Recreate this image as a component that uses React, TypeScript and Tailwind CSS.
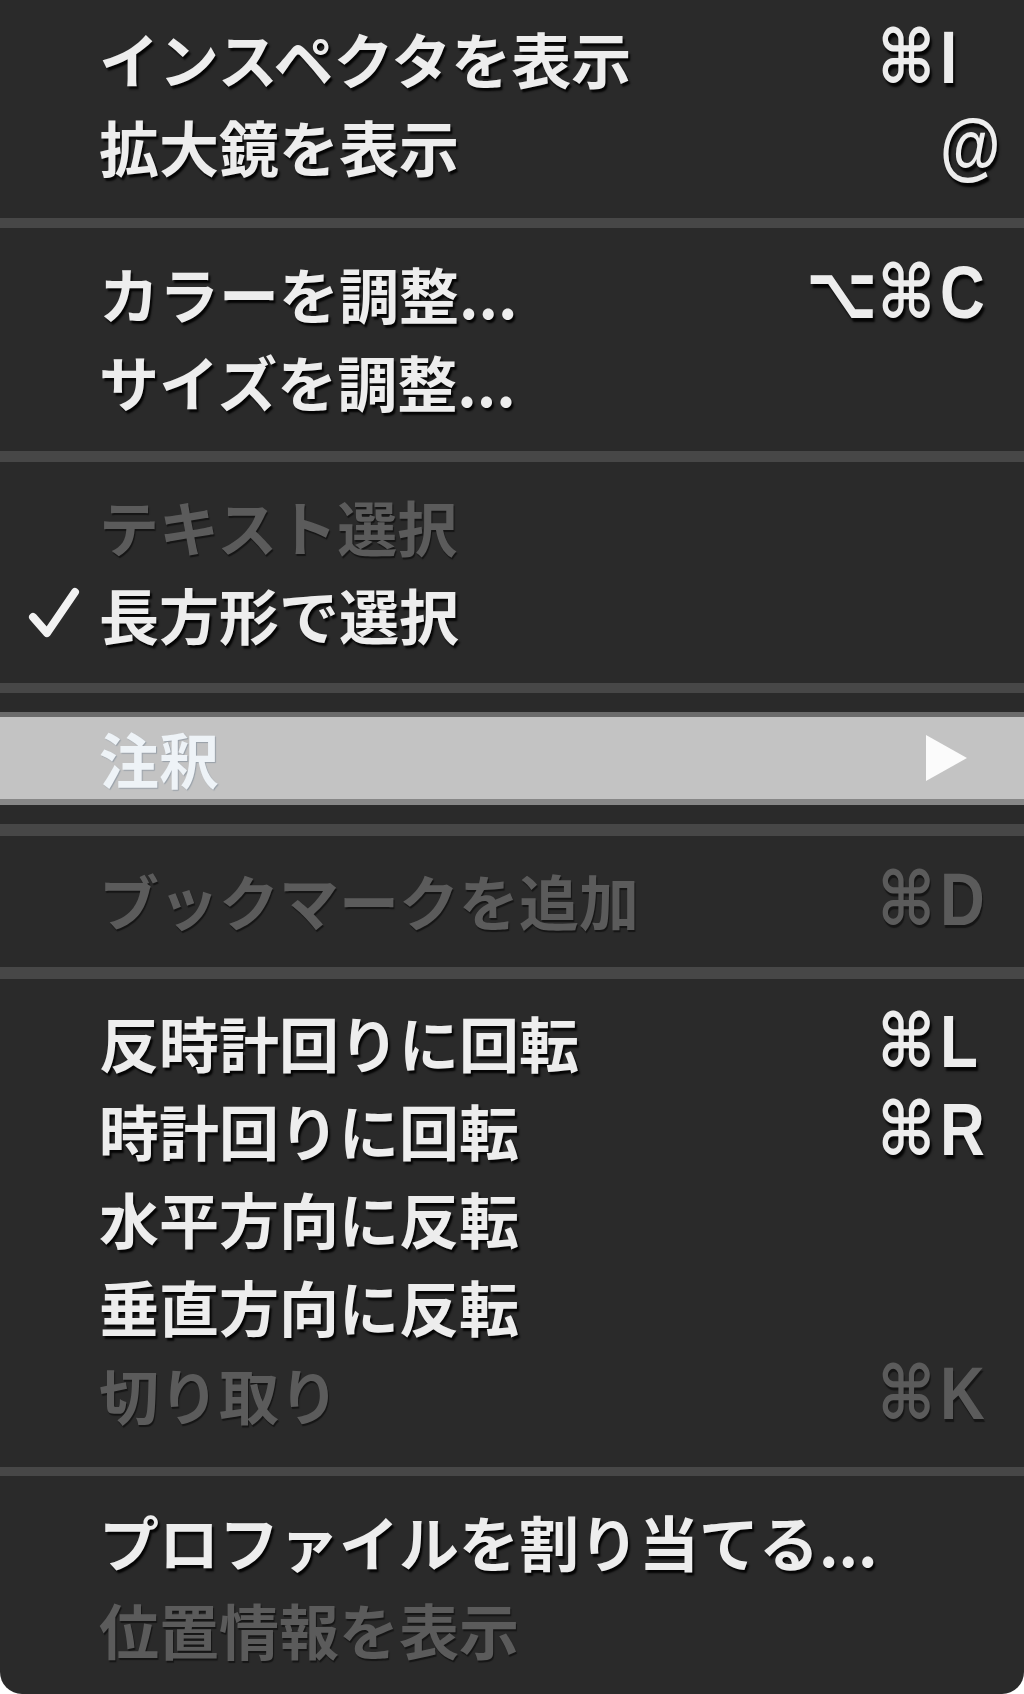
import React from "react";

type Row =
  | { type: "item"; label: string; mod?: string; keyName?: string; disabled?: boolean; checked?: boolean }
  | { type: "sep"; className: string }
  | { type: "submenu"; label: string };

const rows: Row[] = [
  { type: "item", label: "インスペクタを表示", mod: "⌘", keyName: "I" },
  { type: "item", label: "拡大鏡を表示", keyName: "@" },
  { type: "sep", className: "mt-[28px] mb-[21px] h-[10px]" },
  { type: "item", label: "カラーを調整...", mod: "⌥⌘", keyName: "C" },
  { type: "item", label: "サイズを調整..." },
  { type: "sep", className: "mt-[26px] mb-[20px] h-[11px]" },
  { type: "item", label: "テキスト選択", disabled: true },
  { type: "item", label: "長方形で選択", checked: true },
  { type: "sep", className: "mt-[25px] mb-[19px] h-[10px]" },
  { type: "submenu", label: "注釈" },
  { type: "sep", className: "mt-[19px] mb-[20px] h-[12px]" },
  { type: "item", label: "ブックマークを追加", mod: "⌘", keyName: "D", disabled: true },
  { type: "sep", className: "mt-[23px] mb-[19px] h-[12px]" },
  { type: "item", label: "反時計回りに回転", mod: "⌘", keyName: "L" },
  { type: "item", label: "時計回りに回転", mod: "⌘", keyName: "R" },
  { type: "item", label: "水平方向に反転" },
  { type: "item", label: "垂直方向に反転" },
  { type: "item", label: "切り取り", mod: "⌘", keyName: "K", disabled: true },
  { type: "sep", className: "mt-[29px] mb-[21px] h-[9px]" },
  { type: "item", label: "プロファイルを割り当てる..." },
  { type: "item", label: "位置情報を表示", disabled: true },
];

function Check() {
  return (
    <svg width="52" height="52" viewBox="0 0 52 52" className="absolute left-[28px] top-[17px]">
      <polyline
        points="5,30 19,46 47,5"
        fill="none"
        stroke="#f2f2f2"
        strokeWidth="8"
        strokeLinecap="round"
        strokeLinejoin="round"
      />
    </svg>
  );
}

function MenuRow({ row }: { row: Extract<Row, { type: "item" }> }) {
  const color = row.disabled
    ? "text-[#5b5b5b] [text-shadow:1px_2px_1px_rgba(0,0,0,0.5)]"
    : "text-[#ededed] [text-shadow:2px_3px_2px_rgba(0,0,0,0.9)]";
  return (
    <div className={`relative flex h-[88px] items-center ${color}`}>
      {row.checked && <Check />}
      <span className="flex-1 pl-[99px] text-[60px] leading-none font-bold whitespace-nowrap">{row.label}</span>
      <span className="inline-block scale-y-[1.2] text-right text-[62px] leading-none font-bold font-['Liberation_Sans','DejaVu_Sans',sans-serif]">
        {row.mod}
      </span>
      <span className="inline-block w-[89px] scale-y-[1.2] pl-[5px] text-[62px] leading-none font-bold font-['Liberation_Sans','DejaVu_Sans',sans-serif]">
        {row.keyName}
      </span>
    </div>
  );
}

export default function App() {
  return (
    <div className="h-[1694px] w-[1024px] bg-white">
      <div className="h-full overflow-hidden rounded-b-[22px] bg-[#2a2a2a] pt-[14px] font-['Noto_Sans_CJK_JP',sans-serif]">
        {rows.map((row, i) => {
          if (row.type === "sep") {
            return <div key={i} className={`bg-[#474747] ${row.className}`} />;
          }
          if (row.type === "submenu") {
            return (
              <div key={i} className="flex h-[93px] flex-col">
                <div className="h-[5px] bg-[#6b6b6b]" />
                <div className="flex flex-1 items-center bg-[#c3c3c3]">
                  <span className="flex-1 pl-[99px] text-[60px] leading-none font-bold text-[#eef3f7] [text-shadow:1px_1px_1px_rgba(90,110,130,0.4)]">
                    {row.label}
                  </span>
                  <svg width="44" height="48" viewBox="0 0 44 48" className="mr-[56px]">
                    <polygon points="2,1 43,24 2,47" fill="#fbfbfb" />
                  </svg>
                </div>
                <div className="h-[6px] bg-[#878787]" />
              </div>
            );
          }
          return <MenuRow key={i} row={row} />;
        })}
      </div>
    </div>
  );
}
